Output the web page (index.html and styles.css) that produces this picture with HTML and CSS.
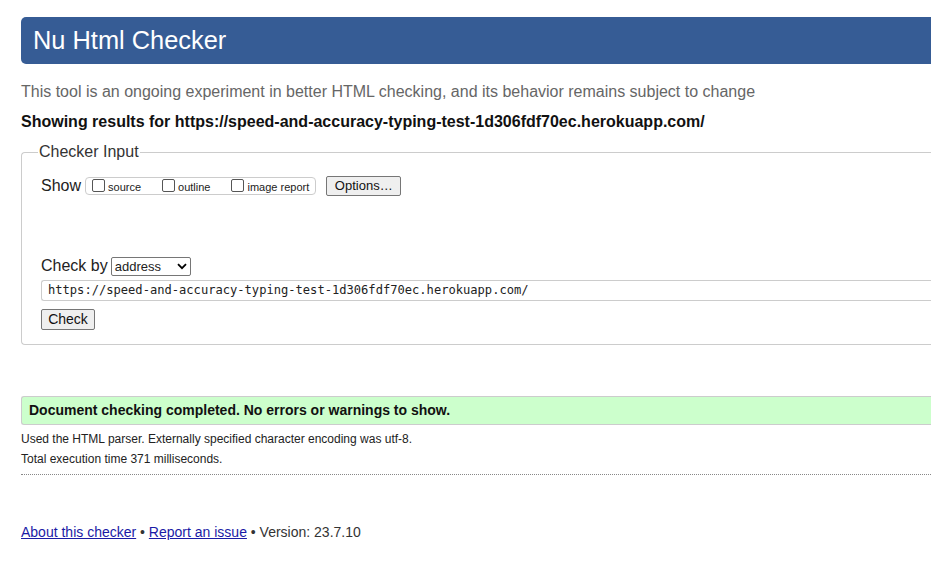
FILE: index.html
```html
<!DOCTYPE html>
<html>
<head>
<meta charset="utf-8">
<title>Nu Html Checker</title>
<link rel="stylesheet" href="styles.css">
</head>
<body>
<div class="page">
  <h1 class="title">Nu Html Checker</h1>
  <p class="intro">This tool is an ongoing experiment in better HTML checking, and its behavior remains subject to change</p>
  <p class="showing">Showing results for https://speed-and-accuracy-typing-test-1d306fdf70ec.herokuapp.com/</p>
  <fieldset class="input-box">
    <legend class="legend">Checker Input</legend>
    <div class="show-row">
      <span class="label">Show</span>
      <span class="opts">
        <label class="opt"><span class="cb"></span>source</label>
        <label class="opt"><span class="cb"></span>outline</label>
        <label class="opt"><span class="cb"></span>image report</label>
      </span>
      <span class="btn options">Options…</span>
    </div>
    <div class="check-row">
      <span class="label">Check by</span>
      <span class="select">address<svg class="chev" width="10" height="7" viewBox="0 0 10 7"><path d="M1 1.2 L5 5.2 L9 1.2" fill="none" stroke="#000" stroke-width="1.8"/></svg></span>
    </div>
    <div class="url">https://speed-and-accuracy-typing-test-1d306fdf70ec.herokuapp.com/</div>
    <span class="btn check">Check</span>
  </fieldset>
  <div class="success">Document checking completed. No errors or warnings to show.</div>
  <p class="details">Used the HTML parser. Externally specified character encoding was utf-8.</p>
  <p class="details">Total execution time 371 milliseconds.</p>
  <div class="dotted"></div>
  <p class="footer"><a href="#">About this checker</a> • <a href="#">Report an issue</a> • Version: 23.7.10</p>
</div>
</body>
</html>
```
FILE: styles.css
```css
html, body {
  margin: 0;
  padding: 0;
  background: #fff;
  overflow: hidden;
}
body {
  font-family: "Liberation Sans", Arial, sans-serif;
  color: #222;
}
.page {
  width: 1000px;
  padding: 17px 0 0 21px;
}
.title {
  margin: 0;
  height: 47px;
  box-sizing: border-box;
  background: #365c95;
  color: #fff;
  border-radius: 5px 0 0 5px;
  font-weight: normal;
  font-size: 25.4px;
  line-height: 47px;
  padding-left: 12px;
}
.intro {
  margin: 18px 0 0;
  font-size: 16px;
  line-height: 20px;
  color: #666;
}
.showing {
  margin: 10px 0 0;
  font-size: 16px;
  line-height: 20px;
  font-weight: bold;
  color: #111;
}
.input-box {
  margin: 11px 0 0;
  padding: 15px 0 14px 19px;
  border: 1px solid #ccc;
  border-right: none;
  border-radius: 4px 0 0 4px;
  min-width: 0;
}
.legend {
  padding: 0 1px;
  margin-left: -3px;
  font-size: 16px;
  color: #333;
}
.label {
  font-size: 16px;
  color: #222;
}
.show-row {
  display: flex;
  align-items: center;
  gap: 4px;
  height: 20px;
}
.opts {
  display: inline-flex;
  align-items: center;
  border: 1px solid #ccc;
  border-radius: 4px;
  height: 16px;
  padding: 0 6px 0 6px;
}
.opt {
  display: inline-flex;
  align-items: center;
  font-size: 11px;
  color: #222;
  margin-right: 21px;
  padding-top: 2px;
}
.opt:last-child { margin-right: 0; }
.cb {
  width: 11px;
  height: 11px;
  border: 1px solid #555;
  border-radius: 2px;
  margin-right: 3px;
  margin-top: -4px;
}
.btn {
  display: inline-block;
  box-sizing: border-box;
  background: #efefef;
  border: 1px solid #767676;
  border-radius: 2px;
  font-size: 13px;
  color: #111;
  text-align: center;
}
.options {
  margin-left: 6px;
  width: 75px;
  height: 20px;
  line-height: 18px;
}
.check-row {
  display: flex;
  align-items: center;
  gap: 3px;
  margin-top: 60px;
  height: 20px;
}
.select {
  display: inline-flex;
  align-items: center;
  justify-content: space-between;
  box-sizing: border-box;
  width: 80px;
  height: 19px;
  border: 1px solid #767676;
  border-radius: 2px;
  font-size: 13px;
  padding: 0 3px 0 3px;
}
.chev { margin-top: 1px; }
.url {
  margin-top: 4px;
  height: 21px;
  box-sizing: border-box;
  border: 1px solid #ccc;
  border-right: none;
  border-radius: 3px 0 0 3px;
  font-family: "DejaVu Sans Mono", "Liberation Mono", monospace;
  font-size: 12.1px;
  line-height: 19px;
  padding-left: 6px;
  color: #222;
}
.check {
  margin-top: 8px;
  width: 54px;
  height: 21px;
  line-height: 19px;
  font-size: 14px;
}
.success {
  margin-top: 51px;
  height: 29px;
  box-sizing: border-box;
  background: #ccffcc;
  border: 1px solid #ccc;
  border-right: none;
  border-radius: 3px 0 0 3px;
  font-weight: bold;
  font-size: 14px;
  line-height: 27px;
  padding-left: 7px;
  color: #111;
}
.details {
  margin: 7px 0 0;
  font-size: 12px;
  line-height: 14px;
  color: #222;
}
.details + .details { margin-top: 6px; }
.dotted {
  margin-top: 8px;
  border-top: 1px dotted #888;
}
.footer {
  margin: 48px 0 0;
  font-size: 14px;
  line-height: 18px;
  color: #333;
}
.footer a {
  color: #1a1aa6;
}
```
